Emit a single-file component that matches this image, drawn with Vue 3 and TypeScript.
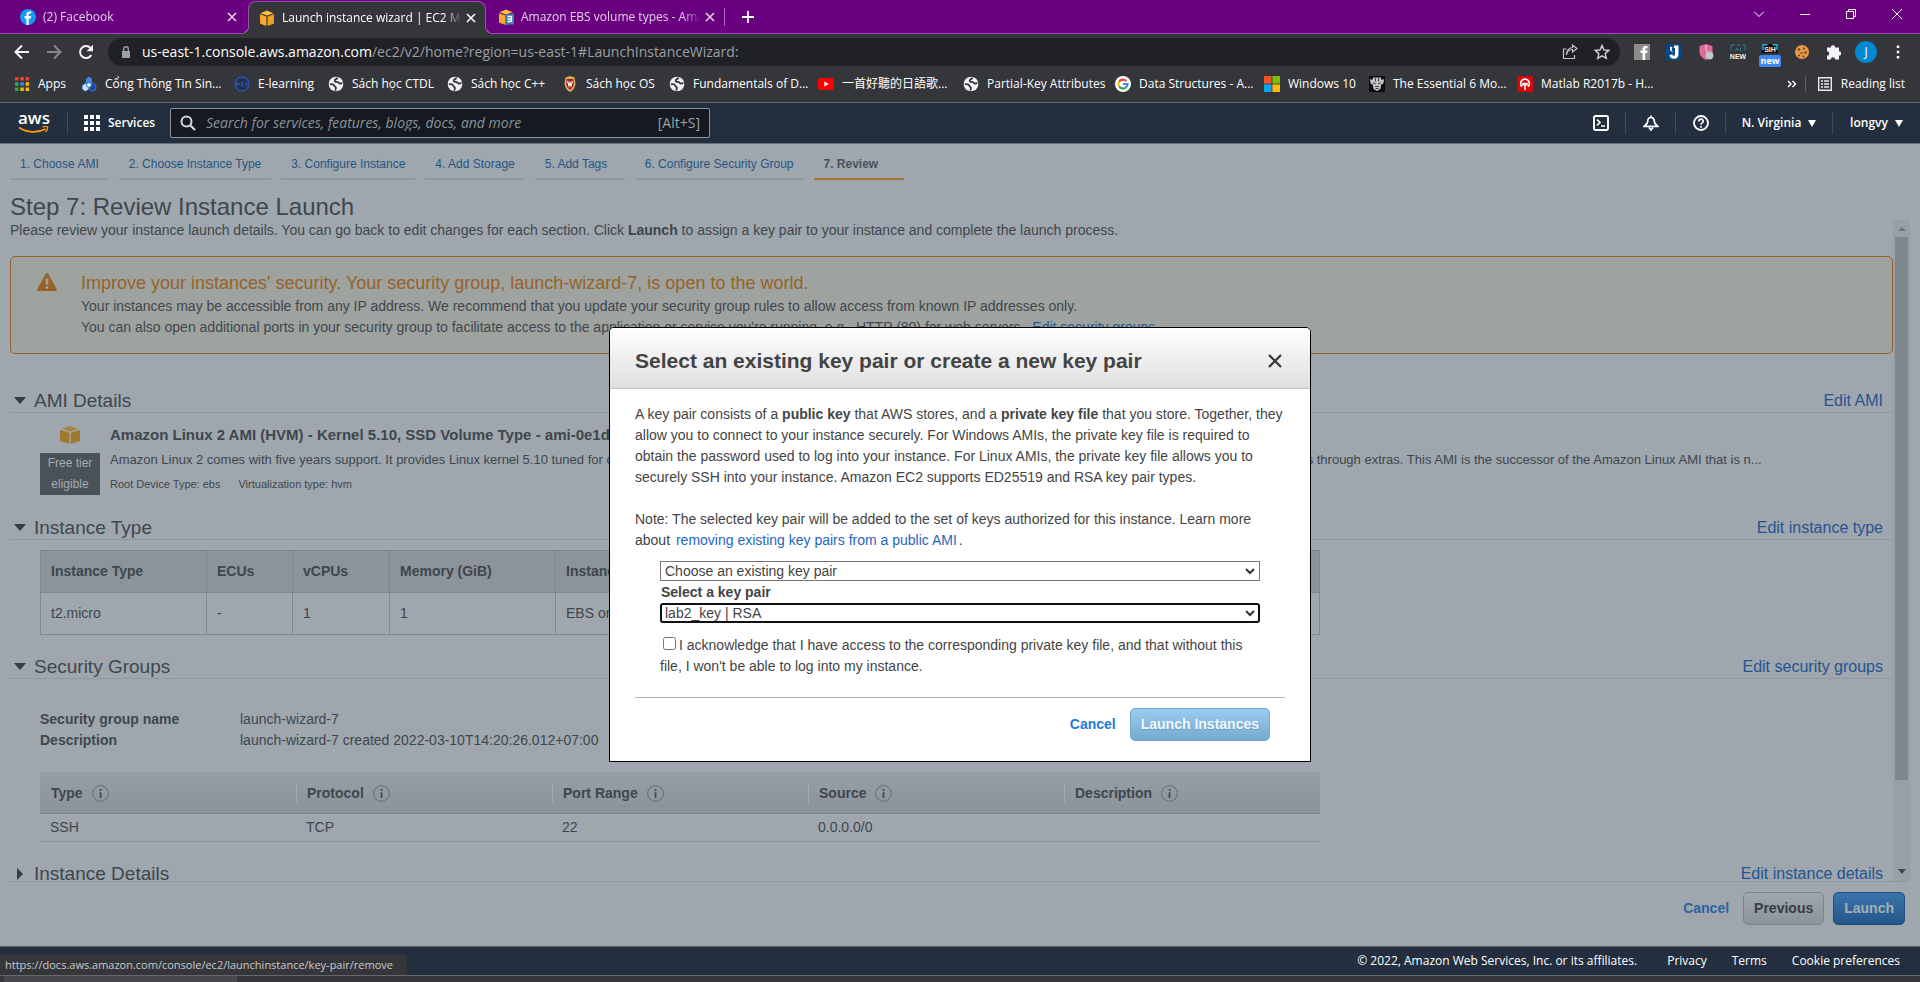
<script setup lang="ts">
import { ref } from 'vue'

interface BrowserTab { title: string; icon: string; active: boolean }
interface Bookmark { label: string; icon: string }

const tabs: BrowserTab[] = [
  { title: '(2) Facebook', icon: 'facebook', active: false },
  { title: 'Launch instance wizard | EC2 Management Console', icon: 'cube', active: true },
  { title: 'Amazon EBS volume types - Amazon Elastic Compute Cloud', icon: 'docs', active: false },
]

const bookmarks: Bookmark[] = [
  { label: 'Apps', icon: 'apps' },
  { label: 'Cổng Thông Tin Sin...', icon: 'bk' },
  { label: 'E-learning', icon: 'bkel' },
  { label: 'Sách học CTDL', icon: 'globe' },
  { label: 'Sách học C++', icon: 'globe' },
  { label: 'Sách học OS', icon: 'crest' },
  { label: 'Fundamentals of D...', icon: 'globe' },
  { label: '一首好聽的日語歌...', icon: 'youtube' },
  { label: 'Partial-Key Attributes', icon: 'globe' },
  { label: 'Data Structures - A...', icon: 'google' },
  { label: 'Windows 10', icon: 'windows' },
  { label: 'The Essential 6 Mo...', icon: 'robot' },
  { label: 'Matlab R2017b - H...', icon: 'matlab' },
]

const steps: string[] = [
  '1. Choose AMI',
  '2. Choose Instance Type',
  '3. Configure Instance',
  '4. Add Storage',
  '5. Add Tags',
  '6. Configure Security Group',
  '7. Review',
]

const groupColumns: string[] = ['Type', 'Protocol', 'Port Range', 'Source', 'Description']
const groupRow: string[] = ['SSH', 'TCP', '22', '0.0.0.0/0', '']

const mode = ref<string>('existing')
const keyPair = ref<string>('lab2_key')
const acknowledged = ref<boolean>(false)
</script>

<template>
  <div class="screen">
    <header class="chrome">
      <div class="tabstrip">
        <div v-for="tab in tabs" :key="tab.icon" class="tab" :class="{ active: tab.active }">
          <svg v-if="tab.icon === 'facebook'" class="i16" viewBox="0 0 16 16">
            <circle cx="8" cy="8" r="8" fill="#1199f6" />
            <path d="M8.7 16V9.4h2l.4-2.3H8.7V5.8c0-.7.4-1.2 1.3-1.2h1.2V2.6C9 2.200 6.400 2.500 6.400 5.400v1.700H4.500v2.300h1.900V16z" fill="#fff" />
          </svg>
          <svg v-else class="i16" viewBox="0 0 16 16">
            <path d="M1.500 3.200 8 .5l6.500 2.700L8 5.500z" fill="#fdbf3c" />
            <path d="M1 4.300l6.400 2.200V16L1 13.600z" fill="#f7a92b" />
            <path d="M15 4.300 8.600 6.500V16l6.400-2.400z" fill="#f0a01f" />
            <template v-if="tab.icon === 'docs'">
              <path d="M7 5h9v10.500H7z" fill="#3b7fae" />
              <path d="M9.500 7.500h4M9.500 10h4M9.500 12.500h4M13.500 7v6" stroke="#fff" stroke-width="1.300" fill="none" />
            </template>
          </svg>
          <span class="tab-title">{{ tab.title }}</span>
          <button class="bare" type="button" aria-label="Close tab">
            <svg class="i10" viewBox="0 0 10 10"><path d="M1 1l8 8M9 1 1 9" stroke="currentColor" stroke-width="1.600" /></svg>
          </button>
        </div>
        <button class="bare new-tab" type="button" aria-label="New tab">
          <svg class="i12" viewBox="0 0 12 12"><path d="M6 0v12M0 6h12" stroke="currentColor" stroke-width="1.800" /></svg>
        </button>
        <div class="window-controls">
          <button class="bare" type="button" aria-label="Search tabs"><svg class="i10" viewBox="0 0 10 10"><path d="M0 2.500l5 5 5-5" fill="none" stroke="currentColor" /></svg></button>
          <button class="bare" type="button" aria-label="Minimize"><svg class="i10" viewBox="0 0 10 10"><path d="M0 5.500h10" stroke="currentColor" /></svg></button>
          <button class="bare" type="button" aria-label="Restore"><svg class="i10" viewBox="0 0 10 10"><path d="M.5 2.500h7v7h-7zM2.500 2.500v-2h7v7h-2" fill="none" stroke="currentColor" /></svg></button>
          <button class="bare" type="button" aria-label="Close"><svg class="i10" viewBox="0 0 10 10"><path d="M0 0l10 10M10 0 0 10" stroke="currentColor" /></svg></button>
        </div>
      </div>

      <div class="toolbar">
        <div class="nav-buttons">
          <button class="bare" type="button" aria-label="Back"><svg class="i16" viewBox="0 0 16 16"><path d="M15 8H2M8 1.500 1.500 8 8 14.500" fill="none" stroke="#f1f3f4" stroke-width="2" /></svg></button>
          <button class="bare" type="button" aria-label="Forward"><svg class="i16" viewBox="0 0 16 16"><path d="M1 8h13M8 1.500 14.500 8 8 14.500" fill="none" stroke="#85878a" stroke-width="2" /></svg></button>
          <button class="bare" type="button" aria-label="Reload"><svg class="i16" viewBox="0 0 16 16"><path d="M13.300 11A6 6 0 1 1 12.500 4" fill="none" stroke="#f1f3f4" stroke-width="2" /><path d="M15 .8v6.400H8.600z" fill="#f1f3f4" /></svg></button>
        </div>
        <div class="omnibox">
          <svg class="i12" viewBox="0 0 12 12"><path d="M2 5h8v7H2z" fill="#9aa0a6" /><path d="M3.700 5V3a2.300 2.300 0 0 1 4.600 0v2" fill="none" stroke="#9aa0a6" stroke-width="1.400" /></svg>
          <p class="url"><span>us-east-1.console.aws.amazon.com</span>/ec2/v2/home?region=us-east-1#LaunchInstanceWizard:</p>
          <svg class="i16" viewBox="0 0 16 16"><path d="M4.500 5H1.500v9.500h11V11M4.500 11c.5-3.500 2.500-5.500 6-5.500V8L15 4.500 10.500 1v2.500C6.500 4 4.500 7 4.500 11z" fill="none" stroke="#c0c3c7" stroke-width="1.200" /></svg>
          <svg class="i16" viewBox="0 0 16 16"><path d="M8 1.500l2 4.500 4.900.4-3.700 3.200 1.100 4.800L8 11.900l-4.300 2.500 1.100-4.800L1.100 6.400 6 6z" fill="none" stroke="#d0d3d7" stroke-width="1.400" /></svg>
        </div>
        <div class="extensions">
          <svg class="i16" viewBox="0 0 16 16"><path d="M0 0h16v16H0z" fill="#8b8b8b" /><path d="M8.500 16V9H6.500V6.500h2V5c0-2.500 1.500-3.500 5-3v2.400c-1.700-.1-2.300 0-2.300 1v1.100h2.300L13.200 9h-2v7z" fill="#fff" /></svg>
          <svg class="i16" viewBox="0 0 16 16"><path d="M0 0h16v16H0z" fill="#064685" /><path d="M8 1.500h4.500V10c0 3-1.500 4.800-4.500 4.800S3.500 13 3.500 11l3-.8c0 1.100.4 1.600 1.200 1.600S9 11.200 9 10V4H8z" fill="#fff" /><path d="M4 2.500l2.500 1L5.500 6 7.500 8.500 4 6.500z" fill="#fff" /></svg>
          <svg class="i16" viewBox="0 0 16 16"><path d="M1.500 2 8 0l6.500 2v6c0 4-3.500 6.500-6.500 8-3-1.500-6.500-4-6.500-8z" fill="#dd6b95" /><path d="M8 1v5l1.500 3" stroke="#fbe4ec" stroke-width=".9" fill="none" /><circle cx="11.500" cy="11.500" r="3.900" fill="#c3c6c9" /></svg>
          <svg class="i16" viewBox="0 0 16 16"><path d="M1 6V1h4M7 1h3M12 1h3v5M5.500 7 7 4l1.500 3M10.500 3.500V7" fill="none" stroke="#1a8593" /><text x="8" y="14.500" text-anchor="middle" class="badge-new">NEW</text></svg>
          <span class="sih">
            <svg class="i16" viewBox="0 0 16 16"><path d="M0 0h16v9H0z" fill="#080808" /><path d="M1 6V.8h4.500M10.500.8H15V6" fill="none" stroke="#17b8e2" stroke-width="1.500" /><text x="8" y="8" text-anchor="middle" class="badge-new">SIH</text></svg>
            <b>new</b>
          </span>
          <svg class="i16" viewBox="0 0 16 16"><circle cx="8" cy="8" r="7" fill="#e59a49" /><circle cx="5" cy="5.500" r="1.200" fill="#7b3f17" /><circle cx="10" cy="4.500" r="1" fill="#7b3f17" /><circle cx="11.500" cy="8.500" r="1.300" fill="#7b3f17" /><circle cx="7.500" cy="9" r="1.100" fill="#7b3f17" /><circle cx="5" cy="11.500" r="1.100" fill="#7b3f17" /><circle cx="9.500" cy="12.500" r="1" fill="#7b3f17" /></svg>
          <svg class="i16" viewBox="0 0 16 16"><path d="M1 3.500h3.800a2.200 2.200 0 1 1 4.400 0H13v3.800a2.200 2.200 0 1 1 0 4.400v3.800H9.200a2.200 2.200 0 1 0-4.400 0H1v-3.800a2.200 2.200 0 1 0 0-4.400z" fill="#f1f3f4" /></svg>
          <span class="avatar">J</span>
          <svg class="i16" viewBox="0 0 16 16"><path d="M6.700 1.500h2.600v2.600H6.700zM6.700 6.700h2.600v2.600H6.700zM6.700 11.900h2.600v2.600H6.700z" fill="#f1f3f4" /></svg>
        </div>
      </div>

      <div class="bookmarks">
        <a v-for="(mark, i) in bookmarks" :key="i" class="bookmark" href="#">
          <svg v-if="mark.icon === 'apps'" class="i16" viewBox="0 0 16 16"><path d="M1 1h3.500v3.500H1zM6.300 1h3.500v3.500H6.300zM11.600 1h3.500v3.500h-3.500z" fill="#ea4335" /><path d="M1 6.300h3.500v3.500H1zM1 11.600h3.500v3.500H1z" fill="#34a853" /><path d="M6.300 6.300h3.500v3.500H6.300z" fill="#4285f4" /><path d="M6.300 11.600h3.500v3.500H6.300zM11.600 6.300h3.500v3.500h-3.500zM11.600 11.600h3.500v3.500h-3.500z" fill="#fbbc05" /></svg>
          <svg v-else-if="mark.icon === 'bk'" class="i16" viewBox="0 0 16 16"><path d="M5 3l3-2.500L11 3v4L8 9 5 7z" fill="#3f8de0" /><path d="M1 9.500 4.500 7 8 9.500v3.700L4.500 15.500 1 13.300z" fill="#cfe4fb" stroke="#1b57b5" /><path d="M8 9.500 11.500 7 15 9.500v3.800l-3.500 2.200L8 13.200z" fill="#164aa8" stroke="#5d94e0" stroke-width=".6" /><circle cx="8" cy="9" r="2.400" fill="#fff" stroke="#2466c4" /></svg>
          <svg v-else-if="mark.icon === 'bkel'" class="i16" viewBox="0 0 16 16"><circle cx="8" cy="8" r="7" fill="#25304d" stroke="#2d50b4" stroke-width="1.400" /><path d="M3 6v4M3 8h3M8 6v4h2M12.500 6v4" stroke="#3159d6" stroke-width="1.200" fill="none" /></svg>
          <svg v-else-if="mark.icon === 'globe'" class="i16" viewBox="0 0 16 16"><circle cx="8" cy="8" r="7.300" fill="#f1f3f4" /><path d="M1.800 8.300C4 7.800 5.800 8.500 6.300 9.800c.4 1 1.400.9 1.600 1.900.2 1-.6 1.500-.4 3M9.500 1.500c-.3 1.700-2 1.400-2.600 2.500-.7 1.300.5 2 1.900 1.900 1.500-.1 1.700 1.400 3 1.600 1 .2 1.600-.5 2.700-.3" fill="none" stroke="#35363a" stroke-width="1.800" /></svg>
          <svg v-else-if="mark.icon === 'crest'" class="i16" viewBox="0 0 16 16"><path d="M3.500 1.500 8 0l4.500 1.500 1 6.500c-.5 4-2.700 6.500-5.500 8-2.800-1.500-5-4-5.500-8z" fill="#d3b45a" /><path d="M4.800 3h6.400l.6 5c-.3 2.700-1.800 4.500-3.800 5.700C6 12.500 4.500 10.700 4.200 8z" fill="#a81a1f" /><path d="M5.600 5 7 10l1-3.500L9 10l1.400-5" stroke="#fff" stroke-width="1.100" fill="none" /></svg>
          <svg v-else-if="mark.icon === 'youtube'" class="i16" viewBox="0 0 16 16"><rect y="2" width="16" height="12" rx="3" fill="#f00" /><path d="M6.300 5.500v5L10.800 8z" fill="#fff" /></svg>
          <svg v-else-if="mark.icon === 'google'" class="i16" viewBox="0 0 16 16"><circle cx="8" cy="8" r="8" fill="#fff" /><g fill="none" stroke-width="2.200"><path d="M4.100 5.800A4.500 4.500 0 0 1 11.300 5" stroke="#ea4335" /><path d="M4.100 10.200a4.500 4.500 0 0 1 0-4.400" stroke="#fbbc05" /><path d="M11 11.400a4.500 4.500 0 0 1-6.900-1.200" stroke="#34a853" /><path d="M8 8h4.500A4.500 4.500 0 0 1 11 11.400" stroke="#4285f4" /></g></svg>
          <svg v-else-if="mark.icon === 'windows'" class="i16" viewBox="0 0 16 16"><path d="M0 0h7.600v7.600H0z" fill="#f35325" /><path d="M8.400 0H16v7.600H8.400z" fill="#81bc06" /><path d="M0 8.400h7.600V16H0z" fill="#05a6f0" /><path d="M8.400 8.400H16V16H8.400z" fill="#ffba08" /></svg>
          <svg v-else-if="mark.icon === 'robot'" class="i16" viewBox="0 0 16 16"><path d="M0 0h16v16H0z" fill="#0b0b0b" /><path d="M.8 3 3.500 4 4 1.500h8l.5 2.500 2.700-1-1 5-2 .5-.7 4.500-3.500 2-3.500-2-.7-4.500-2-.5z" fill="#c4c4c4" /><path d="M4 6.800 7 7.800M12 6.800 9 7.800M6 10.500h4M6.500 12.500h3M6.500 2v3.500M9.500 2v3.500" stroke="#333" stroke-width=".9" fill="none" /></svg>
          <svg v-else class="i16" viewBox="0 0 16 16"><rect width="16" height="16" rx="2" fill="#d8060b" /><path d="M5 10.700a4.400 4.400 0 1 1 6 0M8 14V7.500M6 9.500V7.500h4v2" fill="none" stroke="#fff" stroke-width="1.600" /></svg>
          <span>{{ mark.label }}</span>
        </a>
        <div class="bookmark-tail">
          <svg class="i10" viewBox="0 0 10 10"><path d="M1 2l3 3-3 3M5.500 2l3 3-3 3" fill="none" stroke="#f1f3f4" stroke-width="1.500" /></svg>
          <i class="rule"></i>
          <svg class="i16" viewBox="0 0 16 16"><path d="M1.700 1.700h12.600v12.600H1.700z" fill="none" stroke="#e8eaed" stroke-width="1.400" /><path d="M4 5h2M7 5h5M4 8h2M7 8h5M4 11h2M7 11h5" stroke="#e8eaed" stroke-width="1.500" /></svg>
          <span>Reading list</span>
        </div>
      </div>
    </header>

    <nav class="awsbar">
      <a href="#" class="logo" aria-label="AWS home">
        <span>aws</span>
        <svg viewBox="0 0 31 8"><path d="M1 1.500c8 5.500 19 5.500 26.500 1.500" fill="none" stroke="#f90" stroke-width="1.800" /><path d="M24.500 1c2-.7 4.500-.8 5 0s-.5 3.500-2 5" fill="none" stroke="#f90" stroke-width="1.300" /></svg>
      </a>
      <i class="divider"></i>
      <button class="bare services" type="button">
        <svg class="i16" viewBox="0 0 16 16"><path d="M0 0h4v4H0zM6 0h4v4H6zM12 0h4v4h-4zM0 6h4v4H0zM6 6h4v4H6zM12 6h4v4h-4zM0 12h4v4H0zM6 12h4v4H6zM12 12h4v4h-4z" fill="#fff" /></svg>
        Services
      </button>
      <label class="search">
        <svg class="i16" viewBox="0 0 16 16"><circle cx="6.500" cy="6.500" r="5" fill="none" stroke="#d5dbdb" stroke-width="2" /><path d="M10 10l5 5" stroke="#d5dbdb" stroke-width="2.200" /></svg>
        <input type="text" placeholder="Search for services, features, blogs, docs, and more" aria-label="Search" />
        <span>[Alt+S]</span>
      </label>
      <div class="account">
        <button class="bare cell" type="button" aria-label="CloudShell"><svg class="i16" viewBox="0 0 16 16"><rect x="1" y="1" width="14" height="14" rx="1.500" fill="none" stroke="#fff" stroke-width="1.900" /><path d="M4 4.500 7 7.500l-3 3M8 11h4" fill="none" stroke="#fff" stroke-width="1.700" /></svg></button>
        <button class="bare cell" type="button" aria-label="Notifications"><svg class="i16" viewBox="0 0 16 16"><path d="M8 .5v2M8 2.500c-2.500 0-3.300 2-3.300 4S3 9.500 1.200 11.300h13.600C13 9.500 11.300 8.500 11.300 6.500s-.8-4-3.300-4zM6 12.500 8 15l2-2.500" fill="none" stroke="#fff" stroke-width="1.700" /></svg></button>
        <button class="bare cell" type="button" aria-label="Help"><svg class="i16" viewBox="0 0 16 16"><circle cx="8" cy="8" r="7" fill="none" stroke="#fff" stroke-width="1.900" /><path d="M5.800 6.500c0-3 4.400-3 4.400-.3C10.200 8 8 7.800 8 9.700M8 11v1.700" fill="none" stroke="#fff" stroke-width="1.700" /></svg></button>
        <button class="bare cell wide" type="button">N. Virginia <i class="caret"></i></button>
        <button class="bare cell last" type="button">longvy <i class="caret"></i></button>
      </div>
    </nav>

    <main class="page">
      <nav class="steps">
        <a v-for="(step, i) in steps" :key="step" href="#" :class="{ current: i === steps.length - 1 }">{{ step }}</a>
      </nav>
      <h1>Step 7: Review Instance Launch</h1>

      <div class="scroller">
        <div class="content">
          <p>Please review your instance launch details. You can go back to edit changes for each section. Click <b>Launch</b> to assign a key pair to your instance and complete the launch process.</p>

          <section class="warning">
            <svg viewBox="0 0 20 18"><path d="M10 0c.7 0 1 .3 1.400 1L19.700 16c.6 1.200.1 2-1.100 2H1.400C.2 18-.3 17.200.3 16L8.600 1C9 .3 9.300 0 10 0z" fill="#966229" /><path d="M10 5.500v6M10 13.300v2.500" stroke="#9ea3a0" stroke-width="2.600" /></svg>
            <div>
              <h2>Improve your instances' security. Your security group, launch-wizard-7, is open to the world.</h2>
              <p>Your instances may be accessible from any IP address. We recommend that you update your security group rules to allow access from known IP addresses only.</p>
              <p>You can also open additional ports in your security group to facilitate access to the application or service you're running, e.g., HTTP (80) for web servers.&nbsp; <a href="#">Edit security groups</a></p>
            </div>
          </section>

          <section class="block">
            <header><i class="arrow down"></i><h2>AMI Details</h2><a href="#">Edit AMI</a></header>
            <div class="ami">
              <div class="ami-side">
                <svg viewBox="0 0 20 18"><path d="M2 2.700 10 0l8 2.700-8 2.800z" fill="#a5823b" /><path d="M0 3.700l9.300 3.100V18L0 15z" fill="#a1792d" /><path d="M20 3.700 10.700 6.800V18L20 15z" fill="#a1792d" /></svg>
                <span>Free tier eligible</span>
              </div>
              <div class="ami-text">
                <h3>Amazon Linux 2 AMI (HVM) - Kernel 5.10, SSD Volume Type - ami-0e1d30f2c40c4c701</h3>
                <p>Amazon Linux 2 comes with five years support. It provides Linux kernel 5.10 tuned for optimal performance on Amazon EC2, systemd 219, GCC 7.3, Glibc 2.26, Binutils 2.29.1, and the latest software packages through extras. This AMI is the successor of the Amazon Linux AMI that is n...</p>
                <small><span>Root Device Type: ebs</span><span>Virtualization type: hvm</span></small>
              </div>
            </div>
          </section>

          <section class="block">
            <header><i class="arrow down"></i><h2>Instance Type</h2><a href="#">Edit instance type</a></header>
            <table class="types">
              <colgroup><col class="c1" /><col class="c2" /><col class="c3" /><col class="c4" /><col /><col /><col /></colgroup>
              <thead><tr><th>Instance Type</th><th>ECUs</th><th>vCPUs</th><th>Memory (GiB)</th><th>Instance Storage (GB)</th><th>EBS-Optimized Available</th><th>Network Performance</th></tr></thead>
              <tbody><tr><td>t2.micro</td><td>-</td><td>1</td><td>1</td><td>EBS only</td><td>-</td><td>Low to Moderate</td></tr></tbody>
            </table>
          </section>

          <section class="block">
            <header><i class="arrow down"></i><h2>Security Groups</h2><a href="#">Edit security groups</a></header>
            <dl>
              <dt>Security group name</dt><dd>launch-wizard-7</dd>
              <dt>Description</dt><dd>launch-wizard-7 created 2022-03-10T14:20:26.012+07:00</dd>
            </dl>
            <table class="rules">
              <thead>
                <tr>
                  <th v-for="name in groupColumns" :key="name">
                    <div>{{ name }}<svg viewBox="0 0 17 17"><circle cx="8.500" cy="8.500" r="7.900" fill="none" stroke="#656c74" /><path d="M7.700 4h1.700v1.700H7.700zM7.700 7.300h1.700v5.700H7.700z" fill="#3f464d" /></svg></div>
                  </th>
                </tr>
              </thead>
              <tbody><tr><td v-for="(cell, i) in groupRow" :key="i">{{ cell }}</td></tr></tbody>
            </table>
          </section>

          <section class="block">
            <header><i class="arrow right"></i><h2>Instance Details</h2><a href="#">Edit instance details</a></header>
          </section>
        </div>
        <div class="scrollbar"><i class="up"></i><div class="track"><div class="thumb"></div></div><i class="dn"></i></div>
      </div>

      <div class="actions">
        <a href="#">Cancel</a>
        <button class="btn" type="button">Previous</button>
        <button class="btn primary" type="button">Launch</button>
      </div>

      <div class="backdrop">
        <div class="modal" role="dialog" aria-labelledby="dlg-title">
          <header>
            <h2 id="dlg-title">Select an existing key pair or create a new key pair</h2>
            <button class="bare" type="button" aria-label="Close"><svg class="i14" viewBox="0 0 14 14"><path d="M1 1l12 12M13 1 1 13" stroke="#333" stroke-width="2.200" /></svg></button>
          </header>
          <div class="modal-body">
            <p>A key pair consists of a <b>public key</b> that AWS stores, and a <b>private key file</b> that you store. Together, they allow you to connect to your instance securely. For Windows AMIs, the private key file is required to obtain the password used to log into your instance. For Linux AMIs, the private key file allows you to securely SSH into your instance. Amazon EC2 supports ED25519 and RSA key pair types.</p>
            <p>Note: The selected key pair will be added to the set of keys authorized for this instance. Learn more about <a href="#">removing existing key pairs from a public AMI</a>.</p>
            <div class="fields">
              <div class="select">
                <select v-model="mode" aria-label="Key pair option"><option value="existing">Choose an existing key pair</option></select>
                <svg viewBox="0 0 10 7"><path d="M1 1l4 4 4-4" fill="none" stroke="#333" stroke-width="2" /></svg>
              </div>
              <label class="name" for="key-pair">Select a key pair</label>
              <div class="select focused">
                <select id="key-pair" v-model="keyPair"><option value="lab2_key">lab2_key | RSA</option></select>
                <svg viewBox="0 0 10 7"><path d="M1 1l4 4 4-4" fill="none" stroke="#333" stroke-width="2" /></svg>
              </div>
              <label class="ack"><input v-model="acknowledged" type="checkbox" />I acknowledge that I have access to the corresponding private key file, and that without this file, I won't be able to log into my instance.</label>
            </div>
            <div class="modal-actions">
              <a href="#">Cancel</a>
              <button class="btn pale" type="button">Launch Instances</button>
            </div>
          </div>
        </div>
      </div>
    </main>

    <footer class="foot">
      <span>© 2022, Amazon Web Services, Inc. or its affiliates.</span>
      <a href="#">Privacy</a>
      <a href="#">Terms</a>
      <a href="#">Cookie preferences</a>
      <div class="status">https://docs.aws.amazon.com/console/ec2/launchinstance/key-pair/remove</div>
    </footer>
    <div class="shelf"><i></i></div>
  </div>
</template>

<style>
html, body { overflow: hidden; background: #35363a; }
</style>

<style scoped>
* { box-sizing: border-box; }
h1, h2, h3, p, dl, dd { margin: 0; font-weight: 400; }
a { color: inherit; text-decoration: none; }
svg { display: block; flex: none; }
.bare { display: flex; align-items: center; justify-content: center; padding: 0; border: 0; background: none; color: inherit; font: inherit; }
.i10 { width: 10px; height: 10px; }
.i12 { width: 12px; height: 12px; }
.i14 { width: 14px; height: 14px; }
.i16 { width: 16px; height: 16px; }

.screen { display: flex; flex-direction: column; height: 100vh; min-width: 1400px; font-family: "Liberation Sans", Arial, sans-serif; font-size: 14px; line-height: 21px; color: #3e464e; }

.chrome { flex: none; background: #35363a; font-family: "Open Sans", "Noto Sans CJK TC", sans-serif; font-size: 12px; line-height: 16px; color: #fff; border-bottom: 1px solid #66686b; }
.tabstrip { display: flex; height: 34px; background: linear-gradient(#9b4eae, #9b4eae) bottom / 100% 1px no-repeat #68007f; }
.tab { position: relative; display: flex; align-items: center; width: 238px; height: 34px; padding: 0 9px 0 12px; color: #e3cfe8; }
.tab:first-child { width: 248px; padding-left: 20px; padding-right: 11px; }
.tab .i16 { margin-right: 7px; }
.tab-title { flex: 1; overflow: hidden; white-space: nowrap; margin-right: 4px; mask-image: linear-gradient(90deg, #000 90%, transparent); }
.tab.active { height: 33px; margin-top: 1px; padding-left: 10px; background: #35363a; color: #fff; border: 1px solid #9b4eae; border-bottom: 0; border-radius: 8px 8px 0 0; }
.tab.active::before, .tab.active::after { content: ""; position: absolute; bottom: 0; width: 8px; height: 8px; }
.tab.active::before { left: -8px; background: radial-gradient(circle at 0 0, #68007f 7px, #9b4eae 7px, #9b4eae 8px, #35363a 8px); }
.tab.active::after { right: -8px; background: radial-gradient(circle at 100% 0, #68007f 7px, #9b4eae 7px, #9b4eae 8px, #35363a 8px); }
.new-tab { width: 46px; height: 18px; margin-top: 8px; border-left: 1px solid #a86bb7; color: #fff; }
.window-controls { display: flex; align-items: center; margin-left: auto; height: 28px; }
.window-controls .bare { width: 46px; }

.toolbar { display: flex; align-items: center; height: 32px; padding: 4px 14px 0 14px; }
.nav-buttons { display: flex; gap: 16px; margin-right: 14px; }
.omnibox { flex: 1; display: flex; align-items: center; gap: 16px; height: 28px; padding: 0 10px 0 12px; border-radius: 14px; background: #202124; }
.url { flex: 1; margin-left: -6px; font-size: 14px; line-height: 20px; color: #9aa0a6; white-space: nowrap; }
.url span { color: #fff; }
.extensions { display: flex; align-items: center; gap: 16px; margin-left: 14px; }
.badge-new { font: 700 7px "Liberation Sans", sans-serif; fill: #f1f3f4; }
.sih { position: relative; }
.sih b { position: absolute; left: -3px; top: 11px; width: 22px; height: 12px; border-radius: 2px; background: #4285f4; font-size: 9px; line-height: 11px; text-align: center; }
.avatar { width: 22px; height: 22px; margin: 0 -3px; border-radius: 50%; background: #0288d1; text-align: center; line-height: 22px; }

.bookmarks { display: grid; grid-template-columns: 67px 153px 94px 119px 115px 107px 149px 145px 152px 149px 105px 148px 150px 1fr; align-items: center; height: 36px; padding: 0 15px 0 14px; }
.bookmark { display: flex; align-items: center; gap: 8px; white-space: nowrap; }
.bookmark-tail { display: flex; align-items: center; justify-content: flex-end; gap: 8px; }
.rule { width: 1px; height: 16px; background: #5f6368; margin-right: 3px; }

.awsbar { flex: none; display: flex; align-items: center; height: 41px; background: #232f3e; border-bottom: 1px solid #687078; color: #fff; font: 600 12px/16px "Open Sans", sans-serif; }
.logo { width: 32px; margin: 0 17px 0 18px; text-align: center; font-size: 17px; line-height: 14px; font-weight: 600; }
.logo svg { width: 31px; height: 8px; }
.logo span { display: block; height: 13px; line-height: 10px; }
.divider { width: 1px; height: 22px; background: #414d5c; }
.services { width: 70px; margin: 0 16px; gap: 8px; justify-content: flex-start; }
.search { display: flex; align-items: center; gap: 10px; width: 540px; height: 30px; padding: 0 9px; border: 1px solid #879596; border-radius: 2px; background: #161921; font-weight: 400; font-size: 14px; color: #95a5a6; }
.search input { flex: 1; min-width: 0; padding: 0; border: 0; outline: 0; background: none; font: inherit; color: #fff; }
.search input::placeholder { color: #879596; font-style: italic; opacity: 1; }
.account { display: flex; align-items: center; margin-left: auto; }
.cell { width: 50px; height: 22px; gap: 7px; border-right: 1px solid #414d5c; font-size: 12px; }
.cell.wide { width: 107px; }
.cell.last { width: 87px; border: 0; }
.caret { border: 4px solid transparent; border-top: 7px solid #fff; border-bottom: 0; }

.page { position: relative; flex: 1; min-height: 0; display: flex; flex-direction: column; padding: 0 10px; background: #9fa6ad; }
.steps { display: flex; gap: 10px; }
.steps a { min-width: 90px; padding: 12px 10px 6px; border-bottom: 2px solid #9298a0; font-size: 12px; line-height: 16px; color: #245785; }
.steps .current { color: #4b5259; font-weight: 700; border-color: #a27533; }
h1 { margin-top: 13px; font-size: 24px; line-height: 27px; }
.scroller { flex: 1; min-height: 0; display: flex; }
.content { flex: 1; min-width: 0; overflow: hidden; }
.content a { color: #24558f; }

.warning { display: flex; gap: 24px; margin-top: 15px; padding: 14px 26px 15px; border: 1px solid #966229; border-radius: 5px; background: #9ea3a0; }
.warning svg { width: 20px; height: 18px; margin-top: 2px; }
.warning h2 { font-size: 18px; line-height: 25px; color: #966229; }

.block { margin-top: 20px; }
.warning + .block { margin-top: 35px; }
.block header { display: flex; align-items: flex-end; padding-right: 10px; border-bottom: 1px solid #9097a0; }
.block h2 { font-size: 19px; line-height: 22px; }
.block header a { margin-left: auto; font-size: 16px; line-height: 23px; }
.arrow { align-self: center; width: 24px; height: 10px; }
.arrow::before { content: ""; display: block; width: 0; height: 0; margin: 1px 0 0 4px; border: 6px solid transparent; border-top: 7px solid #353d45; border-bottom: 0; }
.arrow.right::before { margin: -1px 0 0 7px; border: 6px solid transparent; border-left: 6px solid #353d45; border-right: 0; }

.ami { display: flex; gap: 10px; padding-left: 30px; }
.ami-side { width: 60px; flex: none; padding-top: 13px; }
.ami-side svg { width: 20px; height: 18px; margin: 0 auto 9px; }
.ami-side span { display: block; padding: 0 4px; background: #4a5158; color: #a5acb3; font-size: 12px; text-align: center; }
.ami-text { flex: 1; min-width: 0; padding-top: 11px; }
.ami-text h3 { margin-bottom: 4px; font-size: 15px; font-weight: 700; }
.ami-text p { margin-bottom: 4px; font-size: 13px; white-space: nowrap; }
.ami-text small { display: flex; gap: 18px; font-size: 11px; }

table { width: 1280px; max-width: calc(100% - 30px); margin-left: 30px; border-collapse: collapse; table-layout: fixed; text-align: left; }
.types { margin-top: 10px; }
.types th, .types td { height: 42px; padding: 0 10px; border: 1px solid #80878f; overflow: hidden; white-space: nowrap; }
.types th { background: #8c939a; }
.c1 { width: 166px; }
.c2 { width: 86px; }
.c3 { width: 97px; }
.c4 { width: 166px; }

dl { display: grid; grid-template-columns: 200px 1fr; margin: 30px 0 21px 30px; }
dt { font-weight: 700; }
.rules thead tr { background: linear-gradient(#979ea5, #8b9299); }
.rules th { height: 41px; padding: 0; border-bottom: 1px solid #7f868d; border-top: 1px solid #92999f; }
.rules th div { display: flex; align-items: center; gap: 9px; height: 20px; padding-left: 10px; border-left: 1px solid #a4abb2; }
.rules th:first-child div { border-color: transparent; }
.rules th svg { width: 17px; height: 17px; }
.rules td { height: 28px; padding: 0 10px; border-bottom: 1px solid #8b9299; }
.ami { margin-bottom: 21px; }

.scrollbar { flex: none; display: flex; flex-direction: column; align-items: center; width: 17px; padding: 7px 2px; background: #999fa6; }
.track { flex: 1; width: 13px; margin: 6px 0 8px; }
.thumb { height: 87%; background: #7f868d; }
.up, .dn { border: 4px solid transparent; }
.up { border-top: 0; border-bottom-color: #6c7379; }
.dn { border-bottom: 0; border-top: 5px solid #3f464d; }

.actions { display: flex; align-items: center; height: 65px; padding: 0 5px 11px 0; justify-content: flex-end; border-top: 1px solid #9097a0; }
.actions a { margin-right: 14px; font-weight: 700; color: #2d649f; }
.btn { height: 33px; padding: 0 10px; border: 1px solid #7d848b; border-radius: 5px; background: linear-gradient(#9fa6ad, #8c939a); font: 700 14px/21px "Liberation Sans", Arial, sans-serif; color: #353d45; }
.btn.primary { margin-left: 9px; border-color: #234e7c; background: linear-gradient(#3a73ac, #245787); color: #a5afb9; }
.btn.pale { border-color: #72a6cd; background: linear-gradient(#9acdf0, #75a9cf); color: #f3f9fe; text-shadow: 0 1px 1px #6a9cc2; }

.backdrop { position: absolute; inset: 0; display: flex; align-items: center; justify-content: center; padding-bottom: 2px; }
.modal { width: 702px; background: #fff; color: #444; border: 1px solid #000; border-radius: 5px 5px 0 0; overflow: hidden; }
.modal header { display: flex; align-items: center; justify-content: space-between; height: 61px; padding: 6px 28px 0 25px; background: linear-gradient(#fff, #dfdfdf); border-bottom: 1px solid #c4c4c4; }
.modal h2 { font-size: 21px; font-weight: 700; line-height: 28px; color: #444; }
.modal-body { padding: 15px 25px 20px; }
.modal-body p + p { margin-top: 21px; }
.modal-body p a { margin: 0 2px; color: #1f66c0; }
.fields { padding: 10px 25px 20px; }
.select { position: relative; }
.select select { display: block; width: 100%; height: 20px; padding: 0 4px; appearance: none; border: 1px solid #767676; border-radius: 0; background: #fff; font: 14px/18px "Liberation Sans", Arial, sans-serif; color: #444; outline: 0; }
.select svg { position: absolute; right: 5px; top: 7px; width: 10px; height: 7px; }
.focused select { border: 2px solid #101010; border-radius: 3px; padding: 0 3px; line-height: 16px; }
.name { display: block; padding: 1px 0 0 1px; font-weight: 700; }
.ack { display: block; margin-top: 12px; }
.ack input { width: 13px; height: 13px; margin: 0 3px; }
.modal-actions { display: flex; align-items: center; justify-content: flex-end; padding: 10px 15px 0 0; border-top: 1px solid #b5b5b5; }
.modal-actions a { margin-right: 14px; font-weight: 700; color: #2579de; }

.foot { position: relative; flex: none; display: flex; align-items: center; justify-content: flex-end; gap: 25px; height: 30px; padding-right: 20px; background: #232f3e; border-top: 1px solid #59626b; border-bottom: 1px solid #66686b; color: #fff; font: 500 12px/16px "Open Sans", sans-serif; }
.foot span { margin-right: 5px; }
.status { position: absolute; left: 0; bottom: 0; height: 21px; padding: 0 14px 0 5px; border-radius: 0 4px 0 0; background: #35363a; color: #c8cacd; font-size: 11px; font-weight: 400; line-height: 21px; }
.shelf { flex: none; height: 6px; background: #35363a; }
.shelf i { display: block; width: 233px; height: 6px; margin-left: 4px; background: #47484c; }
</style>
